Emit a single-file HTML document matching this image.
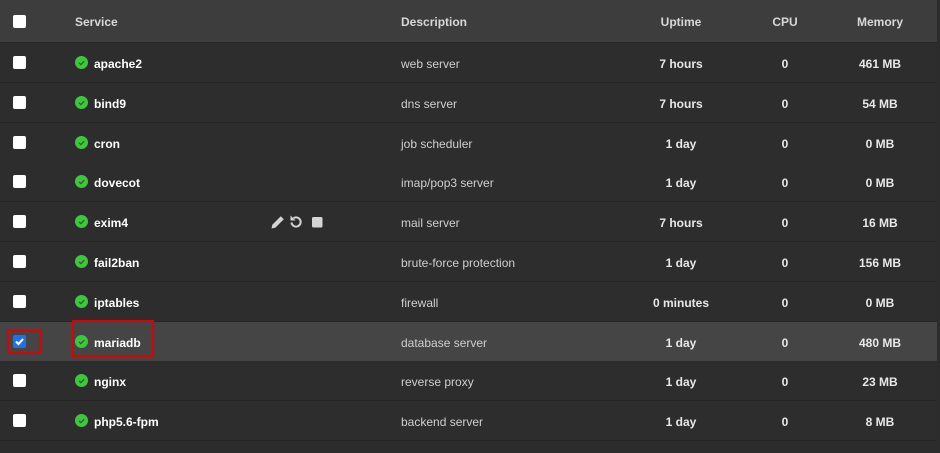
<!DOCTYPE html>
<html><head><meta charset="utf-8"><style>
*{margin:0;padding:0;box-sizing:border-box}
body{width:940px;height:453px;background:#2c2c2c;font-family:"Liberation Sans",sans-serif;position:relative;overflow:hidden}
.hdr{position:absolute;left:0;top:0;width:937px;height:43px;background:#3d3d3d;border-bottom:1px solid #262626}
.row{position:absolute;left:0;width:937px;height:40px;border-bottom:1px solid #262626;background:#2d2d2d}
.row.sel{background:#454545}
.cb{position:absolute;left:13px;width:13px;height:13px;background:#fff;border-radius:2px}
.t{position:absolute;font-size:12px;line-height:14px;white-space:nowrap}
.h{color:#d8d8d8;font-weight:bold}
.n{color:#fff;font-weight:bold;left:94px}
.d{color:#cfcfcf;left:401px}
.c{color:#e8e8e8;font-weight:bold;transform:translateX(-50%)}
.ok{position:absolute;left:75px;width:13px;height:13px;border-radius:50%;background:#3ec63e}
.ok svg{position:absolute;left:0;top:0}
.red{position:absolute;border:2px solid #e00000}
</style></head><body>
<div class="hdr"></div>
<div class="cb" style="top:15px"></div>
<div class="t h" style="left:75px;top:15px">Service</div>
<div class="t h" style="left:401px;top:15px">Description</div>
<div class="t h" style="left:681px;top:15px;transform:translateX(-50%)">Uptime</div>
<div class="t h" style="left:785px;top:15px;transform:translateX(-50%)">CPU</div>
<div class="t h" style="left:880px;top:15px;transform:translateX(-50%)">Memory</div>

<div id="rows"></div>
<script>
var d=[["apache2","web server","7 hours","461 MB"],["bind9","dns server","7 hours","54 MB"],["cron","job scheduler","1 day","0 MB"],["dovecot","imap/pop3 server","1 day","0 MB"],["exim4","mail server","7 hours","16 MB"],["fail2ban","brute-force protection","1 day","156 MB"],["iptables","firewall","0 minutes","0 MB"],["mariadb","database server","1 day","480 MB"],["nginx","reverse proxy","1 day","23 MB"],["php5.6-fpm","backend server","1 day","8 MB"]];
var h="";
d.forEach(function(r,i){
 var top=43+i*39.8, cy=top+20;
 h+='<div class="row'+(i==7?' sel':'')+'" style="top:'+top+'px"></div>';
 if(i==7){h+='<div class="cb" style="top:'+(cy-7)+'px;background:#1a73e8"><svg width="13" height="13"><path d="M3 6.5l2.5 2.5 4.5-5" stroke="#fff" stroke-width="2" fill="none"/></svg></div>';}
 else h+='<div class="cb" style="top:'+(cy-7)+'px"></div>';
 h+='<div class="ok" style="top:'+(cy-7)+'px"><svg width="13" height="13"><path d="M4 6.8l1.8 1.8 3.4-3.4" stroke="#1d6b1d" stroke-width="1.3" fill="none"/></svg></div>';
 h+='<div class="t n" style="top:'+(cy-6)+'px">'+r[0]+'</div>';
 h+='<div class="t d" style="top:'+(cy-6)+'px">'+r[1]+'</div>';
 h+='<div class="t c" style="left:681px;top:'+(cy-6)+'px">'+r[2]+'</div>';
 h+='<div class="t c" style="left:785px;top:'+(cy-6)+'px">0</div>';
 h+='<div class="t c" style="left:880px;top:'+(cy-6)+'px">'+r[3]+'</div>';
});
document.getElementById("rows").outerHTML=h;
</script>
<svg style="position:absolute;left:270px;top:214px" width="56" height="16">
<path d="M1.5 14.5l0.8-3.8 8.5-8.5 3 3-8.5 8.5z" fill="#d4d4d4"/>
<path d="M23.5 4.2a4.6 4.6 0 1 1-2 4.3" stroke="#d4d4d4" stroke-width="2" fill="none"/>
<path d="M20.5 1.5v5h5z" fill="#d4d4d4"/>
<rect x="42" y="3" width="10.5" height="10.5" rx="1.5" fill="#d4d4d4"/>
</svg>
<div class="red" style="left:7px;top:330px;width:34px;height:24px"></div>
<div class="red" style="left:72px;top:320px;width:82px;height:37px"></div>
</body></html>
